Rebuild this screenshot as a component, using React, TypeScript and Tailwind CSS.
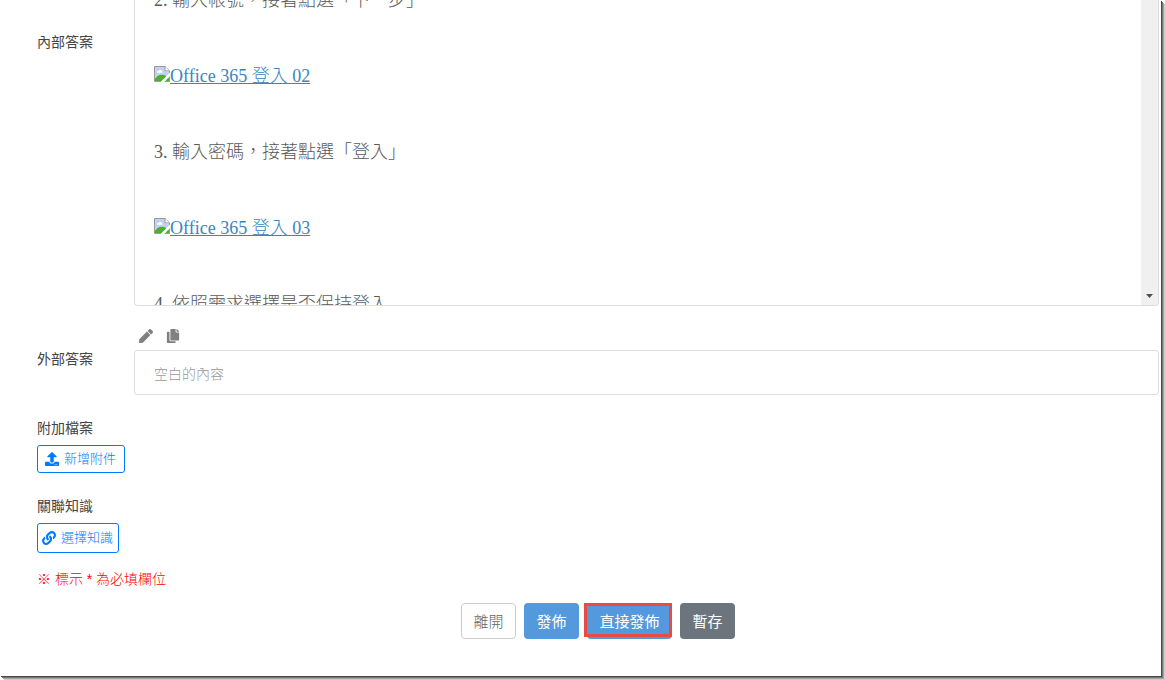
import type { ReactNode } from "react";
import { FaCopy, FaLink, FaPen, FaUpload } from "react-icons/fa";

function BrokenImage() {
  return (
    <svg width="16" height="16" viewBox="0 0 16 16" className="inline-block align-baseline" aria-hidden="true">
      <path d="M.5.5h10.6l4.4 4.4v10.6H.5z" fill="#fff" stroke="#999" />
      <path d="M1 1h10v4.5h4V15H1z" fill="#bfd2f6" />
      <path d="M3 6.8c-.6-1.4.8-2.2 1.6-1.6C5 3.4 7.6 3.6 7.7 5.2c1.2 0 1.3 1.6.3 1.6z" fill="#fff" />
      <path d="M1 15v-2.3c2-2.6 4-4 6.2-4 2 0 3.8.4 5.2 1.4L15 12v3z" fill="#4fae2c" />
      <path d="M16 6.5V10L10.4 16H6.6z" fill="#fff" />
      <path d="M11 .5v4.4h4.4" fill="#fff" stroke="#999" />
    </svg>
  );
}

function ImageLink({ children }: { children: ReactNode }) {
  return (
    <p>
      <a href="#image" className="text-[#3a85c0]">
        <BrokenImage />
        <span className="underline">{children}</span>
      </a>
    </p>
  );
}

const action = "h-9 shrink-0 rounded pt-0.5 text-[15px]";

export default function App() {
  return (
    <div
      lang="zh-Hant"
      className="flex min-h-screen bg-white pr-1 pb-1 font-['Liberation_Sans','Noto_Sans_CJK_TC',sans-serif] text-sm text-[#444]"
    >
      <main className="flex-1 pb-9 shadow-[1px_1px_0_#484848,2px_2px_0_#777,3px_3px_0_#a5a5a5,4px_4px_0_#ccc]">
        <section className="flex pr-0.5 pl-[37px]">
          <h2 className="w-[97px] shrink-0 pt-8 leading-5">內部答案</h2>
          <div className="flex h-[306px] flex-1 overflow-hidden rounded-b border border-t-0 border-[#ddd]">
            <div className="-mt-[19px] flex flex-1 flex-col gap-[38px] pl-[19px] font-['Liberation_Serif','Noto_Sans_CJK_TC',serif] text-lg leading-[38px] font-light text-[#595959]">
              <p>2. 輸入帳號，接著點選「下一步」</p>
              <ImageLink>Office 365 登入 02</ImageLink>
              <p>3. 輸入密碼，接著點選「登入」</p>
              <ImageLink>Office 365 登入 03</ImageLink>
              <p>4. 依照需求選擇是否保持登入</p>
            </div>
            <div className="flex w-[17px] items-end justify-center bg-[#f0f0f0] pb-[7px]">
              <svg width="7" height="4" viewBox="0 0 7 4" aria-hidden="true">
                <path d="M0 0h7L3.5 4z" fill="#505050" />
              </svg>
            </div>
          </div>
        </section>

        <section className="flex pt-[22px] pr-0.5 pl-[37px]">
          <label htmlFor="external" className="w-[97px] shrink-0 pt-[21px] leading-5">
            外部答案
          </label>
          <div className="flex-1">
            <div className="flex h-[22px] items-start gap-[13px] pt-px pl-[5px] text-[#808080]">
              <button type="button" aria-label="編輯">
                <FaPen size={14} />
              </button>
              <button type="button" aria-label="複製">
                <FaCopy size={14} />
              </button>
            </div>
            <input
              id="external"
              placeholder="空白的內容"
              className="h-[45px] w-full rounded-[3px] border border-[#ddd] px-[19px] pt-0.5 font-light placeholder:text-[#999]"
            />
          </div>
        </section>

        <section className="flex flex-col items-start pt-[23px] pl-[37px]">
          <h2 className="leading-5">附加檔案</h2>
          <button
            type="button"
            className="mt-[7px] flex h-7 items-center gap-[5px] rounded-[3px] border border-[#007bff] pr-2 pl-[7px] text-[13px] font-light text-[#007bff]"
          >
            <FaUpload size={14} />
            新增附件
          </button>
          <h2 className="mt-[23px] leading-5">關聯知識</h2>
          <button
            type="button"
            className="mt-[7px] flex h-[30px] items-center gap-[5px] rounded-[3px] border border-[#007bff] pr-[5px] pl-1 text-[13px] font-light text-[#007bff]"
          >
            <FaLink size={14} />
            選擇知識
          </button>
          <p className="mt-4 leading-5 font-light text-[#f00]">※ 標示 * 為必填欄位</p>
        </section>

        <div className="flex justify-center gap-2 pt-3.5 pl-[35px]">
          <button type="button" className={`${action} w-[55px] border border-[#ccc] font-light text-[#666]`}>
            離開
          </button>
          <button type="button" className={`${action} w-[55px] bg-[#5499dd] text-white`}>
            發佈
          </button>
          <div className="relative">
            <button type="button" className={`${action} w-[85px] bg-[#5499dd] text-white`}>
              直接發佈
            </button>
            <span className="pointer-events-none absolute top-0 right-0 bottom-0.5 -left-[3px] border-3 border-[#ea4a42]" />
          </div>
          <button type="button" className={`${action} w-[55px] bg-[#6c757d] text-white`}>
            暫存
          </button>
        </div>
      </main>
    </div>
  );
}
